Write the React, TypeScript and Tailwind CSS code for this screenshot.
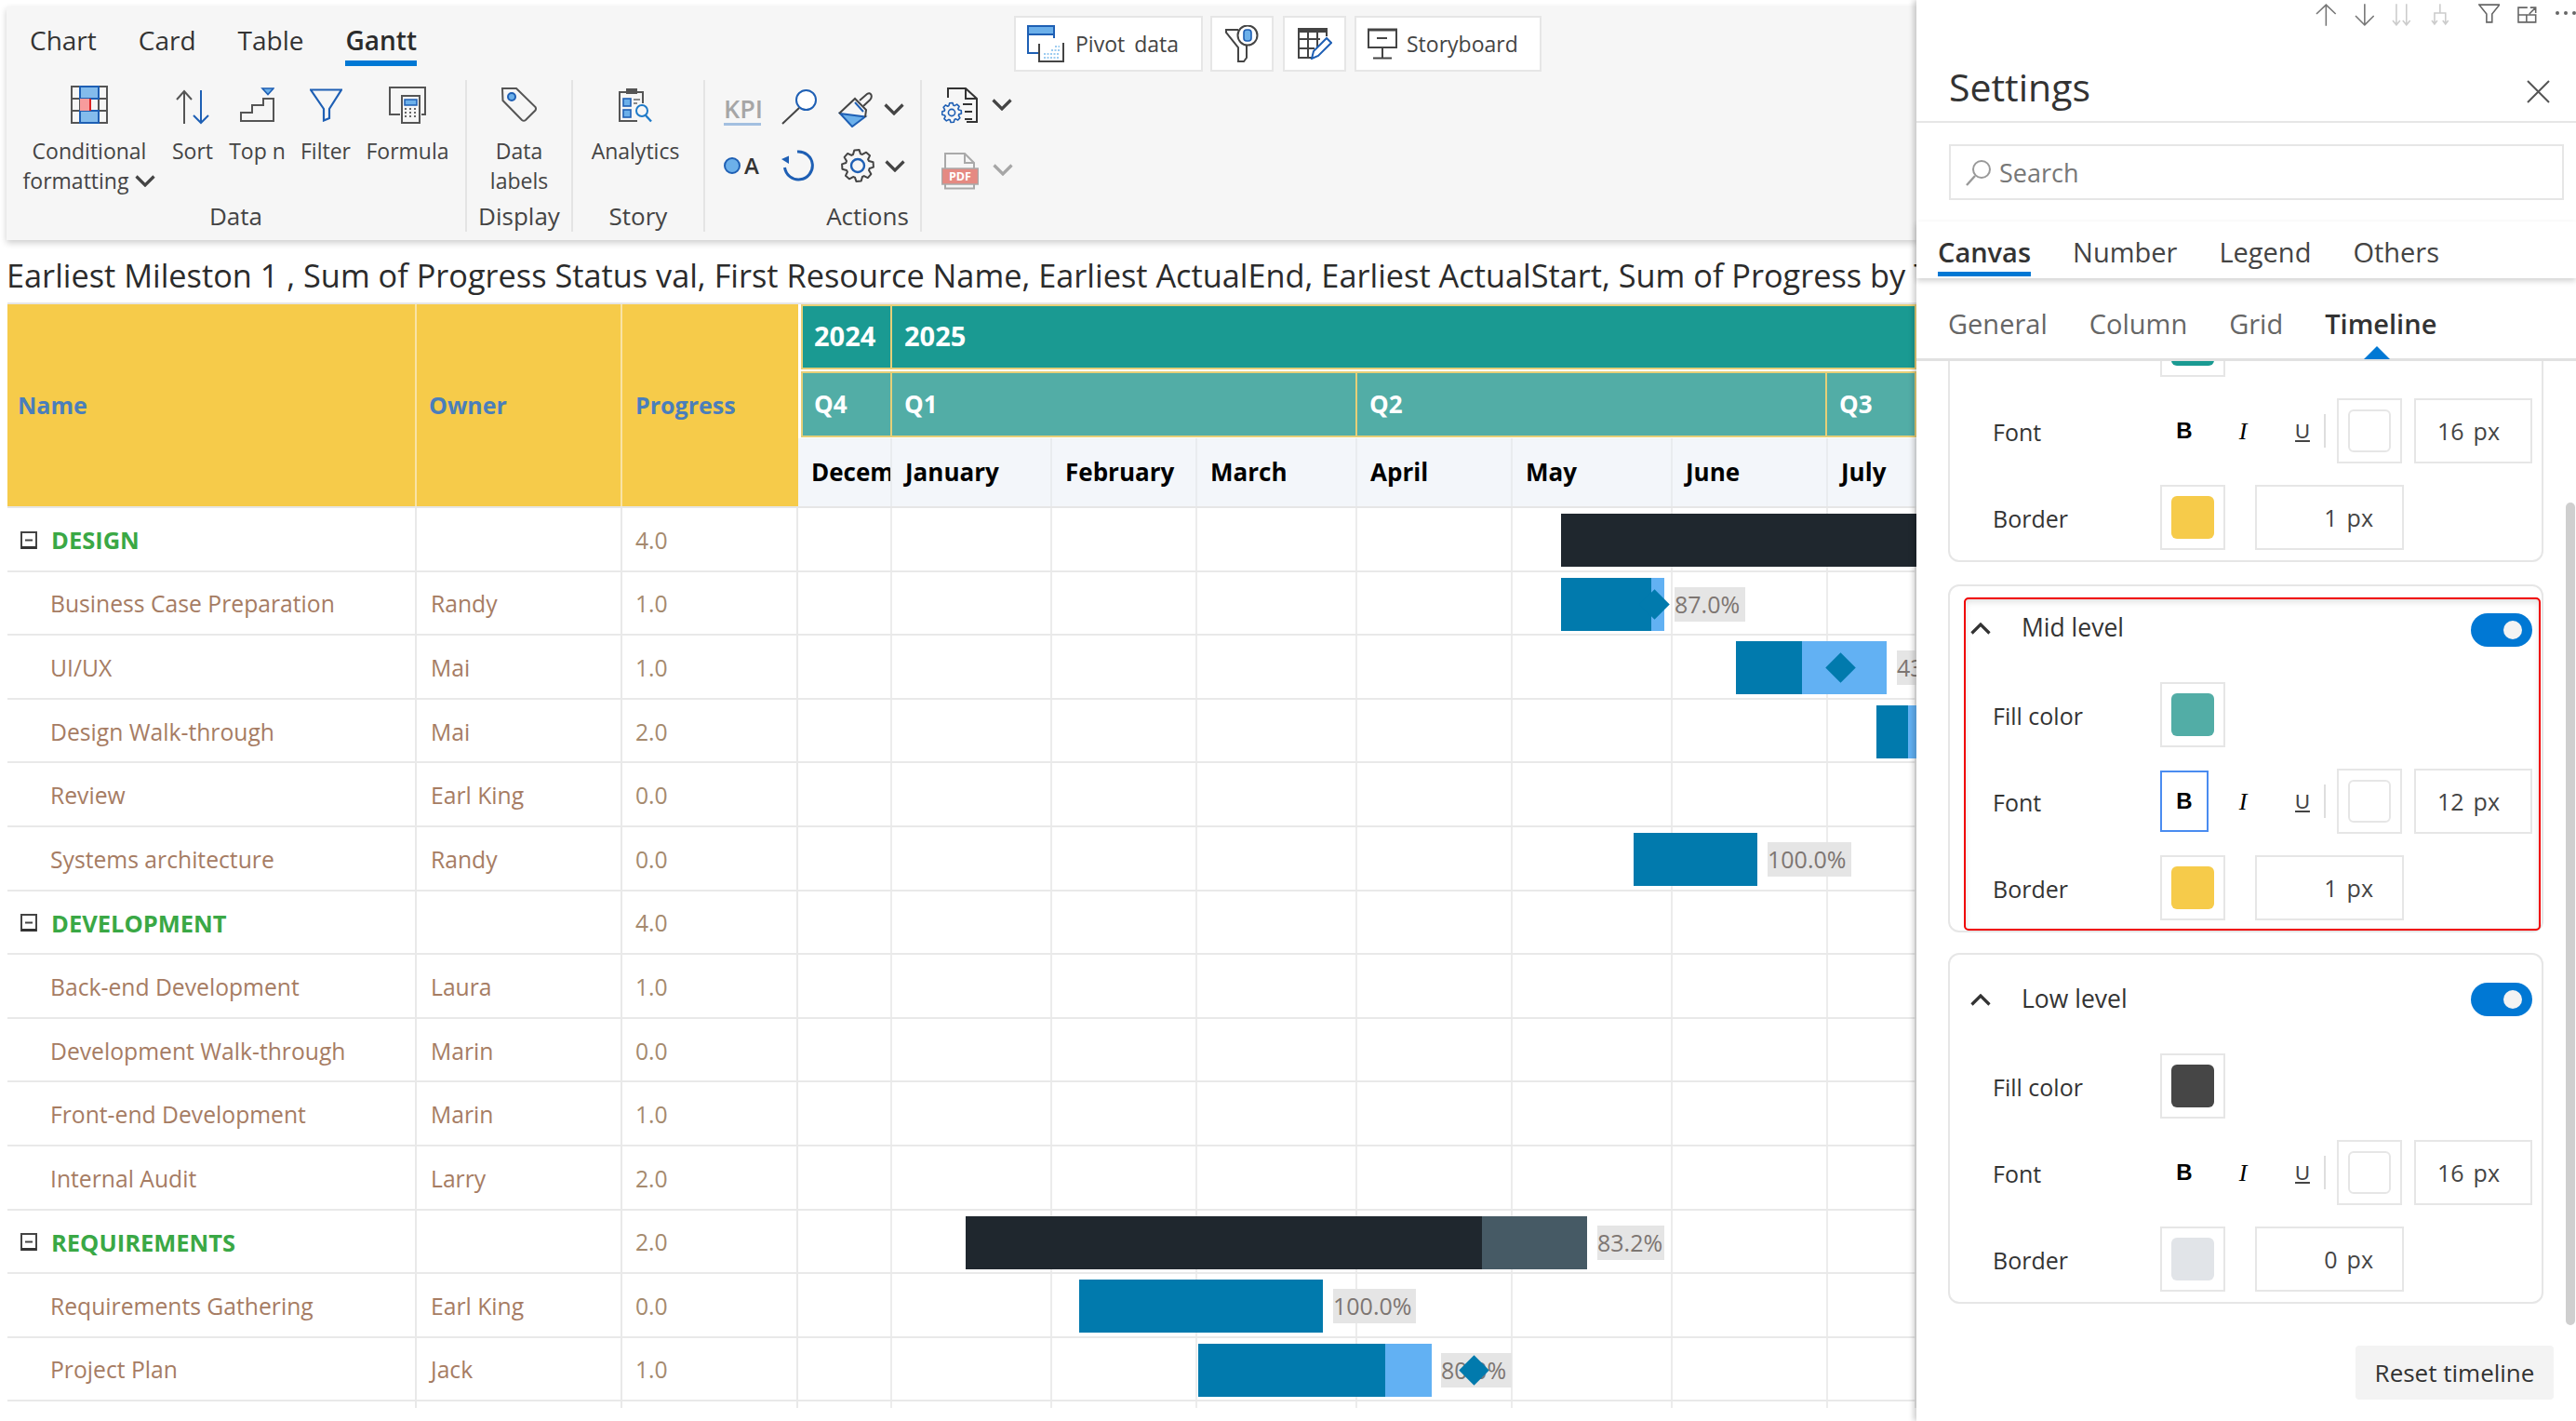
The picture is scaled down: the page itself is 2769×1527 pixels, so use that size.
import React from 'react';

const BLUE = '#1e5fb4';
const LIGHT = '#6cb0ea';

const gearPath = (cx: number, cy: number, outer: number, inner: number, teeth: number) => {
  const pts: string[] = [];
  for (let i = 0; i < teeth; i++) {
    const a = (i / teeth) * Math.PI * 2;
    const s = (Math.PI * 2) / teeth;
    const steps: [number, number][] = [
      [inner, -0.5],
      [outer, -0.28],
      [outer, 0.12],
      [inner, 0.3],
    ];
    steps.forEach(([r, k]) => {
      const t = a + k * s;
      pts.push(`${(cx + Math.cos(t) * r).toFixed(2)} ${(cy + Math.sin(t) * r).toFixed(2)}`);
    });
  }
  return `M${pts.join(' L')} Z`;
};

const Chevron = ({ color = '#444' }: { color?: string }) => (
  <svg width="22" height="13" viewBox="0 0 22 13" fill="none">
    <path d="M1.5 1.5 L11 11 L20.5 1.5" stroke={color} strokeWidth="3.2" />
  </svg>
);

const CondIcon = () => (
  <svg width="40" height="41" viewBox="0 0 40 41" fill="none" className="mt-[6px]">
    <path d="M1 1 H39 V40 H1 Z M1 14 H39 M1 27 H39 M10 1 V40 M30 1 V40" stroke="#555" strokeWidth="2" />
    <rect x="10" y="1" width="20" height="13" fill="#84bcec" stroke={BLUE} strokeWidth="2" />
    <rect x="10" y="27" width="20" height="13" fill="#84bcec" stroke={BLUE} strokeWidth="2" />
    <rect x="10" y="14" width="11" height="13" fill="#f79c9c" />
    <path d="M21 14 V27" stroke="#d22" strokeWidth="2" />
  </svg>
);

const SortIcon = () => (
  <svg width="36" height="38" viewBox="0 0 36 38" fill="none" className="mt-[10px]">
    <path d="M9 37 V2 M1 11 L9 2 L17 11" stroke="#555" strokeWidth="2" />
    <path d="M27 1 V36 M19 28 L27 36 L35 28" stroke={BLUE} strokeWidth="2" />
  </svg>
);

const TopNIcon = () => (
  <svg width="37" height="38" viewBox="0 0 37 38" fill="none" className="mt-[8px]">
    <path d="M24 1 H36 L30 7.5 Z" fill={LIGHT} stroke={BLUE} strokeWidth="1.6" />
    <path d="M1 36 V27 H13 V19 H25 V12 H36 V36 Z" stroke="#555" strokeWidth="2" />
  </svg>
);

const FilterIcon = () => (
  <svg width="35" height="36" viewBox="0 0 35 36" fill="none" className="mt-[9px]">
    <path d="M1 1.5 H34 L21 22 V32 L15 34.5 V22 Z" stroke={BLUE} strokeWidth="2.2" />
  </svg>
);

const FormulaIcon = () => (
  <svg width="40" height="40" viewBox="0 0 40 40" fill="none" className="mt-[7px]">
    <path d="M12 30 H1 V1 H39 V30 H35" stroke="#555" strokeWidth="2" />
    <rect x="14" y="10" width="19" height="29" fill="#f6f6f6" stroke="#555" strokeWidth="2" />
    <rect x="17" y="14" width="13" height="6" fill={LIGHT} stroke={BLUE} strokeWidth="1.5" />
    <path d="M17 24 H19 M22 24 H24 M27 24 H29 M17 28 H19 M22 28 H24 M27 28 H29 M17 32 H19 M22 32 H24 M27 32 H29" stroke="#666" strokeWidth="2" />
  </svg>
);

const TagIcon = () => (
  <svg width="38" height="38" viewBox="0 0 38 38" fill="none" className="mt-[7px]">
    <path d="M1 2 H16 L36.5 22 Q37.5 24 36.5 25.5 L26 36 Q24 37.5 22 36 L1.5 15 Z" stroke="#555" strokeWidth="2" />
    <circle cx="11" cy="11" r="4" fill={LIGHT} stroke={BLUE} strokeWidth="2" />
  </svg>
);

const AnalyticsIcon = () => (
  <svg width="36" height="37" viewBox="0 0 36 37" fill="none" className="mt-[9px]">
    <path d="M20 35 H1 V4 H26 V16" stroke="#555" strokeWidth="2" />
    <rect x="8" y="0" width="12" height="6" fill="#555" />
    <rect x="5" y="11" width="8" height="8" fill={LIGHT} stroke={BLUE} strokeWidth="1.6" />
    <rect x="5" y="23" width="8" height="8" fill={LIGHT} stroke={BLUE} strokeWidth="1.6" />
    <path d="M16 12 H23 M16 16 H20" stroke="#666" strokeWidth="1.6" />
    <circle cx="25" cy="24" r="6" fill="#f6f6f6" stroke="#1e7ac8" strokeWidth="2" />
    <path d="M29 29 L35 35.5" stroke="#1e7ac8" strokeWidth="2.4" />
  </svg>
);

const MagnifierIcon = () => (
  <svg width="38" height="38" viewBox="0 0 38 38" fill="none">
    <circle cx="26.5" cy="11.5" r="10.5" fill="#fff" stroke={BLUE} strokeWidth="2" />
    <path d="M19 20 L1 37" stroke="#444" strokeWidth="2" />
  </svg>
);

const BrushIcon = () => (
  <svg width="37" height="38" viewBox="0 0 37 38" fill="none">
    <path d="M2 23 L29 26.5 L15 37 Z" fill={LIGHT} stroke={BLUE} strokeWidth="2" />
    <path d="M1 23 L18 7 L30 19 L29 27" stroke="#444" strokeWidth="2" />
    <path d="M23 9 L31 2 Q34 0 35.5 3 Q36.5 6 34 8.5 L27 15" stroke="#444" strokeWidth="2" />
    <path d="M18 11 L27 21" stroke={BLUE} strokeWidth="2" />
  </svg>
);

const RefreshIcon = () => (
  <svg width="35" height="34" viewBox="0 0 35 34" fill="none">
    <path d="M17 2 A15 15 0 1 1 3.5 19" stroke={BLUE} strokeWidth="3" />
    <path d="M0 10 L8 6.5 L8 15 Z" fill={BLUE} />
  </svg>
);

const GearIcon = () => (
  <svg width="36" height="36" viewBox="0 0 36 36" fill="none">
    <path d={gearPath(18, 18, 17, 13, 8)} stroke="#444" strokeWidth="2" strokeLinejoin="round" />
    <circle cx="18" cy="18" r="7" stroke={BLUE} strokeWidth="2.4" />
  </svg>
);

const DocGearIcon = () => (
  <svg width="39" height="39" viewBox="0 0 39 39" fill="none">
    <path d="M7 11 V1 H26 L38 12 V37 H27 M26 1 V12 H38 M23 18 H33 M25 26 H33 M25 34 H33" stroke="#333" strokeWidth="2" />
    <path d={gearPath(11, 27, 10.5, 8, 8)} fill="#f6f6f6" stroke={BLUE} strokeWidth="1.6" strokeLinejoin="round" />
    <circle cx="11" cy="27" r="3.6" stroke={BLUE} strokeWidth="1.6" />
  </svg>
);

const PdfIcon = () => (
  <svg width="40" height="40" viewBox="0 0 40 40" fill="none">
    <path d="M4 18 V1 H25 L35 11 V18 M25 1 V11 H35 M4 33 V38.5 H35 V33" stroke="#a9a9a9" strokeWidth="2" />
    <rect x="0.5" y="17" width="39" height="17" fill="#e58a82" stroke="#a9a9a9" strokeWidth="1.5" />
    <text x="20" y="30" textAnchor="middle" fontSize="12.5" fontWeight="700" fill="#fff" fontFamily="'Open Sans', sans-serif">PDF</text>
  </svg>
);

const PivotIcon = () => (
  <svg width="40" height="41" viewBox="0 0 40 41" fill="none">
    <rect x="1" y="1" width="28" height="9" fill={LIGHT} />
    <path d="M12 30 H1 V1 H29 V14 M1 10 H29" stroke={BLUE} strokeWidth="2" />
    <path d="M13 20 V39 H39 V19" stroke="#444" strokeWidth="2" />
    <path d="M18 35 H35 M18 31 H35 M26 27 H35 M30 23 H35" stroke="#9ccbf0" strokeWidth="2" strokeDasharray="2 1.5" />
  </svg>
);

const FunnelDbIcon = () => (
  <svg width="36" height="41" viewBox="0 0 36 41" fill="none">
    <path d="M14 5 H1 V8 L14 24 V39 L20 39 L23 35 V22" stroke="#444" strokeWidth="2" />
    <circle cx="24" cy="11" r="10.5" fill="#fff" stroke="#444" strokeWidth="2" />
    <rect x="20" y="5" width="8" height="12" rx="3" fill={LIGHT} stroke={BLUE} strokeWidth="1.6" />
  </svg>
);

const TableEditIcon = () => (
  <svg width="37" height="34" viewBox="0 0 37 34" fill="none">
    <path d="M31 9 V1 H1 V32 H15 M1 12 H24 M1 22 H18 M11 5 V32 M21 5 V22" stroke="#444" strokeWidth="2" />
    <rect x="1" y="1" width="30" height="4" fill="#444" />
    <path d="M15 33 L17 25 L31 11 L36 16 L22 30 Z" fill="#fff" stroke={BLUE} strokeWidth="2" />
  </svg>
);

const BoardIcon = () => (
  <svg width="32" height="34" viewBox="0 0 32 34" fill="none">
    <path d="M1 2 H31 V21 H1 Z M16 21 V33 M10 11 H21 M6 32.5 H26" stroke="#444" strokeWidth="2" />
    <path d="M0 2 H32" stroke="#444" strokeWidth="3" />
  </svg>
);

const ToolBtn = ({ children, className }: { children: React.ReactNode; className: string }) => (
  <div className={`h-[60px] bg-white border-2 border-[#e6e6e6] flex items-center ${className}`}>{children}</div>
);

const Tool = ({ lines, icon, w }: { lines: React.ReactNode[]; icon: React.ReactNode; w: string }) => (
  <div className={`flex flex-col items-center ${w}`}>
    <div className="h-[60px] flex items-start justify-center">{icon}</div>
    {lines.map((l, i) => (
      <div key={i} className="h-[32px] leading-[32px] whitespace-nowrap text-[23px] text-[#444] flex items-center gap-[7px]">{l}</div>
    ))}
  </div>
);

const Group = ({ label, w, labelClass, children }: { label: string; w: string; labelClass?: string; children: React.ReactNode }) => (
  <div className={`${w} flex flex-col border-r-2 border-[#e4e4e4] h-[163px]`}>
    <div className="flex h-[131px]">{children}</div>
    <div className={`h-[32px] leading-[30px] text-center text-[26px] text-[#444] ${labelClass ?? ''}`}>{label}</div>
  </div>
);

const Ribbon = () => (
  <div className="h-[251px] bg-[#f6f6f6] shadow-[0_3px_7px_rgba(0,0,0,0.2)] relative z-10 shrink-0">
    <div className="flex h-[79px]">
      <div className="w-[1083px] flex pl-[25px] pt-[16px] gap-[45px] text-[28px] text-[#333]">
        <div className="leading-[40px]">Chart</div>
        <div className="leading-[40px]">Card</div>
        <div className="leading-[40px]">Table</div>
        <div className="leading-[40px] h-[48px] font-semibold text-[#2b2b2b] border-b-[6px] border-[#0078d4]">Gantt</div>
      </div>
      <div className="flex pt-[10px] text-[23px] text-[#444]">
        <ToolBtn className="w-[203px] pl-[12px] gap-[12px]">
          <PivotIcon />
          <span className="flex gap-[10px]"><span>Pivot</span><span>data</span></span>
        </ToolBtn>
        <ToolBtn className="w-[68px] ml-[8px] justify-center"><FunnelDbIcon /></ToolBtn>
        <ToolBtn className="w-[68px] ml-[10px] justify-center"><TableEditIcon /></ToolBtn>
        <ToolBtn className="w-[201px] ml-[9px] pl-[12px] gap-[10px]">
          <BoardIcon />
          <span>Storyboard</span>
        </ToolBtn>
      </div>
    </div>
    <div className="flex">
      <Group label="Data" w="w-[495px]">
        <div className="flex pl-[10px]">
          <Tool w="w-[158px]" icon={<CondIcon />} lines={['Conditional', <>formatting<Chevron /></>]} />
          <Tool w="w-[64px]" icon={<SortIcon />} lines={['Sort']} />
          <Tool w="w-[75px]" icon={<TopNIcon />} lines={['Top n']} />
          <Tool w="w-[72px]" icon={<FilterIcon />} lines={['Filter']} />
          <Tool w="w-[104px]" icon={<FormulaIcon />} lines={['Formula']} />
        </div>
      </Group>
      <Group label="Display" w="w-[114px]">
        <Tool w="w-full" icon={<TagIcon />} lines={['Data', 'labels']} />
      </Group>
      <Group label="Story" w="w-[142px]">
        <Tool w="w-full pr-[6px]" icon={<AnalyticsIcon />} lines={['Analytics']} />
      </Group>
      <Group label="Actions" w="w-[233px]" labelClass="pl-[118px] whitespace-nowrap">
        <div className="pl-[20px] pt-[10px] flex flex-col gap-[22px]">
          <div className="flex items-start h-[40px]">
            <div className="w-[40px] mt-[6px] text-[27px] leading-[30px] font-semibold text-[#a6a6a6] text-center border-b-[3px] border-[#a3bfe0]">KPI</div>
            <div className="ml-[22px]"><MagnifierIcon /></div>
            <div className="ml-[23px] mt-[3px]"><BrushIcon /></div>
            <div className="ml-[12px] mt-[15px]"><Chevron /></div>
          </div>
          <div className="flex items-center h-[40px]">
            <div className="w-[40px] flex items-center gap-[4px]">
              <span className="w-[18px] h-[18px] rounded-full bg-[#6cb0ea] border-2 border-[#1e5fb4]" />
              <span className="text-[24px] leading-[24px] text-[#333] font-semibold">A</span>
            </div>
            <div className="ml-[22px]"><RefreshIcon /></div>
            <div className="ml-[29px]"><GearIcon /></div>
            <div className="ml-[11px]"><Chevron /></div>
          </div>
        </div>
      </Group>
      <div className="pl-[21px] pt-[8px] flex flex-col gap-[31px]">
        <div className="flex items-start gap-[15px]"><DocGearIcon /><div className="mt-[12px]"><Chevron /></div></div>
        <div className="flex items-start gap-[15px]"><PdfIcon /><div className="mt-[12px]"><Chevron color="#a6a6a6" /></div></div>
      </div>
    </div>
  </div>
);

type Row = { name: string; owner: string; progress: string; group?: boolean };

const rows: Row[] = [
  { name: 'DESIGN', owner: '', progress: '4.0', group: true },
  { name: 'Business Case Preparation', owner: 'Randy', progress: '1.0' },
  { name: 'UI/UX', owner: 'Mai', progress: '1.0' },
  { name: 'Design Walk-through', owner: 'Mai', progress: '2.0' },
  { name: 'Review', owner: 'Earl King', progress: '0.0' },
  { name: 'Systems architecture', owner: 'Randy', progress: '0.0' },
  { name: 'DEVELOPMENT', owner: '', progress: '4.0', group: true },
  { name: 'Back-end Development', owner: 'Laura', progress: '1.0' },
  { name: 'Development Walk-through', owner: 'Marin', progress: '0.0' },
  { name: 'Front-end Development', owner: 'Marin', progress: '1.0' },
  { name: 'Internal Audit', owner: 'Larry', progress: '2.0' },
  { name: 'REQUIREMENTS', owner: '', progress: '2.0', group: true },
  { name: 'Requirements Gathering', owner: 'Earl King', progress: '0.0' },
  { name: 'Project Plan', owner: 'Jack', progress: '1.0' },
];

const months = [
  { label: 'December', w: 'w-[101px]' },
  { label: 'January', w: 'w-[172px]' },
  { label: 'February', w: 'w-[156px]' },
  { label: 'March', w: 'w-[172px]' },
  { label: 'April', w: 'w-[167px]' },
  { label: 'May', w: 'w-[172px]' },
  { label: 'June', w: 'w-[167px]' },
  { label: 'July', w: 'w-[95px]' },
];

type Seg = { from: number; to: number; color: string };
type Bar = { segs: Seg[]; label?: { from: number; to: number; text: string }; diamond?: number };

const MAIN = 'bg-[#017aad]';
const SOFT = 'bg-[#62b1f3]';
const NAVY = 'bg-[#1f272e]';

const bars: Record<number, Bar> = {
  0: { segs: [{ from: 1678, to: 2060, color: NAVY }] },
  1: { segs: [{ from: 1678, to: 1775, color: MAIN }, { from: 1775, to: 1789, color: SOFT }], label: { from: 1800, to: 1876, text: '87.0%' }, diamond: 1778 },
  2: { segs: [{ from: 1866, to: 1937, color: MAIN }, { from: 1937, to: 2028, color: SOFT }], label: { from: 2039, to: 2120, text: '43.0%' }, diamond: 1978 },
  3: { segs: [{ from: 2017, to: 2051, color: MAIN }, { from: 2051, to: 2120, color: SOFT }] },
  5: { segs: [{ from: 1756, to: 1889, color: MAIN }], label: { from: 1900, to: 1990, text: '100.0%' } },
  11: { segs: [{ from: 1038, to: 1593, color: NAVY }, { from: 1593, to: 1706, color: 'bg-[#465a65]' }], label: { from: 1717, to: 1789, text: '83.2%' } },
  12: { segs: [{ from: 1160, to: 1422, color: MAIN }], label: { from: 1433, to: 1522, text: '100.0%' } },
  13: { segs: [{ from: 1288, to: 1489, color: MAIN }, { from: 1489, to: 1539, color: SOFT }], label: { from: 1549, to: 1625, text: '80.0%' }, diamond: 1584 },
};

// bars are placed on the timeline in page x, the chart starts at 858
const CHART_X = 858;

const GanttBars = ({ bar }: { bar: Bar }) => (
  <>
    {bar.segs.map((s, i) => (
      <div key={i} className={`absolute top-[6px] h-[57px] ${s.color}`} style={{ left: s.from - CHART_X, width: s.to - s.from }} />
    ))}
    {bar.label && (
      <div
        className="absolute top-[16px] h-[37px] bg-[#e5e5e5] text-[#7d7672] text-[25px] leading-[37px] whitespace-nowrap"
        style={{ left: bar.label.from - CHART_X, width: bar.label.to - bar.label.from }}
      >
        {bar.label.text}
      </div>
    )}
    {bar.diamond !== undefined && (
      <div className="absolute top-[23px] w-[23px] h-[23px] rotate-45 bg-[#017aad]" style={{ left: bar.diamond - CHART_X - 11.5 }} />
    )}
  </>
);

const TimelineHeader = () => (
  <div className="w-[1202px] flex flex-col pl-[3px] font-bold">
    <div className="flex h-[72px] text-white text-[29px]">
      <div className="w-[98px] h-[70px] bg-[#1a9a92] border-2 border-[#e6cf78] pl-[12px] pb-[2px] flex items-center">2024</div>
      <div className="flex-1 h-[70px] bg-[#1a9a92] border-2 border-l-0 border-[#e6cf78] pl-[13px] pb-[2px] flex items-center">2025</div>
    </div>
    <div className="flex h-[72px] text-white text-[26px]">
      <div className="w-[98px] h-[71px] bg-[#52ada6] border-2 border-[#e6cf78] pl-[12px] flex items-center">Q4</div>
      <div className="w-[500px] h-[71px] bg-[#52ada6] border-2 border-l-0 border-[#e6cf78] pl-[13px] flex items-center">Q1</div>
      <div className="w-[505px] h-[71px] bg-[#52ada6] border-2 border-l-0 border-[#e6cf78] pl-[13px] flex items-center">Q2</div>
      <div className="flex-1 h-[71px] bg-[#52ada6] border-2 border-l-0 border-[#e6cf78] pl-[13px] flex items-center">Q3</div>
    </div>
    <div className="flex h-[73px] -ml-[3px] bg-[#f3f6fa] text-black text-[26px]">
      {months.map((m) => (
        <div key={m.label} className={`${m.w} shrink-0 overflow-hidden border-r-2 border-[#e9ecef] pl-[14px] flex items-center whitespace-nowrap`}>{m.label}</div>
      ))}
    </div>
  </div>
);

const MinusBox = () => (
  <svg width="18" height="19" viewBox="0 0 18 19" fill="none" className="mr-[15px] shrink-0">
    <path d="M1 1 H17 V18 H1 Z" stroke="#444" strokeWidth="2" />
    <path d="M1 17.5 H17" stroke="#333" strokeWidth="3" />
    <path d="M5 9.5 H13" stroke="#444" strokeWidth="2" />
  </svg>
);

const Gantt = () => (
  <div className="flex flex-col ml-px">
    <div className="h-[2px] bg-[#e6e6e6] w-[2060px]" />
    <div className="flex h-[217px]">
      <div className="w-[440px] bg-[#f6cb4a] border-r-2 border-[#f9e3a5] pl-[11px] flex items-center font-bold text-[25px] text-[#4a7ebb]">Name</div>
      <div className="w-[221px] bg-[#f6cb4a] border-r-2 border-[#f9e3a5] pl-[13px] flex items-center font-bold text-[25px] text-[#4a7ebb]">Owner</div>
      <div className="w-[189px] bg-[#f6cb4a] pl-[14px] flex items-center font-bold text-[25px] text-[#4a7ebb]">Progress</div>
      <TimelineHeader />
    </div>
    <div className="h-[2px] bg-[#e6e6e6] w-[2060px]" />
    {rows.map((r, i) => (
      <div key={r.name} className="flex h-[68.6px] border-b-2 border-[#e9e9e9] text-[24.7px] text-[#a67c63]">
        <div className={`w-[440px] border-r-2 border-[#e9e9e9] pl-[14px] pt-[2px] flex items-center whitespace-nowrap ${r.group ? 'font-bold text-[25.5px] text-[#3aa845]' : ''}`}>
          {r.group ? <MinusBox /> : <div className="w-[32px]" />}
          {r.name}
        </div>
        <div className="w-[221px] border-r-2 border-[#e9e9e9] pl-[15px] pt-[2px] flex items-center">{r.owner}</div>
        <div className="w-[189px] border-r-2 border-[#e9e9e9] pl-[14px] pt-[2px] flex items-center text-[#a58a6e]">{r.progress}</div>
        <div className="w-[1202px] relative flex overflow-hidden">
          {months.map((m) => (
            <div key={m.label} className={`${m.w} shrink-0 border-r-2 border-[#ececec]`} />
          ))}
          {bars[i] && <GanttBars bar={bars[i]} />}
        </div>
      </div>
    ))}
    <div className="flex h-[7px]">
      <div className="w-[440px] border-r-2 border-[#e9e9e9]" />
      <div className="w-[221px] border-r-2 border-[#e9e9e9]" />
      <div className="w-[189px] border-r-2 border-[#e9e9e9]" />
      {months.map((m) => (
        <div key={m.label} className={`${m.w} shrink-0 border-r-2 border-[#ececec]`} />
      ))}
    </div>
  </div>
);

const Swatch = ({ color }: { color: string }) => (
  <div className="w-[70px] h-[70px] border-2 border-[#e6e6e6] flex items-center justify-center shrink-0">
    <div className={`w-[46px] h-[46px] rounded-[6px] ${color}`} />
  </div>
);

const FontRow = ({ size, focus }: { size: string; focus?: boolean }) => (
  <div className="flex items-center h-[70px]">
    <div className="w-[180px] pt-[3px] text-[25px] text-[#333]">Font</div>
    <div className={`w-[52px] h-[66px] flex items-center justify-center text-[24px] font-bold text-black font-['Liberation_Sans'] ${focus ? 'border-2 border-[#4a8cf0]' : ''}`}>B</div>
    <div className="w-[52px] ml-[11px] text-center text-[26px] italic text-black font-['Liberation_Serif']">I</div>
    <div className="w-[52px] ml-[12px] text-center text-[22px] underline text-[#444] font-['Liberation_Sans']">U</div>
    <div className="w-[2px] h-[36px] bg-[#dedede] -ml-[3px]" />
    <div className="w-[70px] h-[70px] ml-[12px] border-2 border-[#e6e6e6] flex items-center justify-center">
      <div className="w-[46px] h-[46px] rounded-[6px] bg-white border-2 border-[#e6e6e6]" />
    </div>
    <div className="w-[127px] h-[70px] ml-[13px] border-2 border-[#e6e6e6] flex items-center justify-end gap-[10px] pr-[33px] pt-[2px] text-[25px] text-[#444]">
      <span>{size}</span><span>px</span>
    </div>
  </div>
);

const BorderRow = ({ color, px }: { color: string; px: string }) => (
  <div className="flex items-center h-[70px]">
    <div className="w-[180px] pt-[3px] text-[25px] text-[#333]">Border</div>
    <Swatch color={color} />
    <div className="w-[160px] h-[70px] ml-[32px] border-2 border-[#e6e6e6] flex items-center justify-end gap-[10px] pr-[31px] pt-[2px] text-[25px] text-[#444]">
      <span>{px}</span><span>px</span>
    </div>
  </div>
);

const Level = ({ title, fill, size, borderColor, px, top, focus, highlight }: {
  title: string; fill: string; size: string; borderColor: string; px: string; top: string; focus?: boolean; highlight?: boolean;
}) => (
  <div className={`relative w-[640px] ml-[34px] border-2 border-[#e6e6e6] rounded-[12px] pl-[46px] pb-[11px] shrink-0 ${top}`}>
    {highlight && <div className="absolute top-[12px] left-[15px] right-[1px] bottom-[0px] border-2 border-[#f00000] rounded-[5px] shadow-[inset_0_3px_6px_rgba(0,0,0,0.12)] pointer-events-none" />}
    <div className="flex items-center h-[36px] -ml-[24px]">
      <svg width="22" height="13" viewBox="0 0 22 13" fill="none">
        <path d="M1.5 11.5 L11 2 L20.5 11.5" stroke="#333" strokeWidth="3.2" />
      </svg>
      <div className="ml-[33px] text-[26.5px] font-medium text-[#333] flex-1">{title}</div>
      <div className={`w-[66px] h-[36px] rounded-full bg-[#0078d4] mr-[10px] flex items-center justify-end pr-[11px] ${highlight ? 'mt-[4px]' : ''}`}>
        <div className="w-[20px] h-[20px] rounded-full bg-[#f3f3f3]" />
      </div>
    </div>
    <div className="flex flex-col gap-[23px] mt-[40px]">
      <div className="flex items-center h-[70px]">
        <div className="w-[180px] pt-[3px] text-[25px] text-[#333]">Fill color</div>
        <Swatch color={fill} />
      </div>
      <FontRow size={size} focus={focus} />
      <BorderRow color={borderColor} px={px} />
    </div>
  </div>
);

const TopIcons = () => (
  <div className="h-[34px] flex pl-[429px] pt-[4px] items-start shrink-0" >
    <svg width="23" height="24" viewBox="0 0 23 24" fill="none"><path d="M11.5 24 V1 M1 11 L11.5 1 L22 11" stroke="#777" strokeWidth="1.6" /></svg>
    <svg width="22" height="24" viewBox="0 0 22 24" fill="none" className="ml-[19px]"><path d="M11 0 V23 M1 13 L11 23 L21 13" stroke="#777" strokeWidth="1.6" /></svg>
    <svg width="21" height="24" viewBox="0 0 21 24" fill="none" className="ml-[19px]"><path d="M5 0 V23 M16 0 V23 M1 18 L5 23 L9 18 M12 18 L16 23 L20 18" stroke="#ccc" strokeWidth="1.6" /></svg>
    <svg width="20" height="24" viewBox="0 0 20 24" fill="none" className="ml-[21px]"><path d="M10 0 V10 M4 22 V10 H16 V22 M1 18 L4 22 L7 18 M13 18 L16 22 L19 18" stroke="#ccc" strokeWidth="1.6" /></svg>
    <svg width="24" height="21" viewBox="0 0 24 21" fill="none" className="ml-[31px]"><path d="M1 1 H23 L15 11 V20 H9 V11 Z" stroke="#666" strokeWidth="1.6" /></svg>
    <svg width="21" height="18" viewBox="0 0 21 18" fill="none" className="ml-[19px] mt-[3px]"><path d="M11 1 H1 V17 H20 V9 H1 M10 9 V17 M13 8 L20 1 M14 1 H20 V7" stroke="#666" strokeWidth="1.6" /></svg>
    <div className="ml-[20px] mt-[8px] flex gap-[5px]">
      <span className="w-[4px] h-[4px] rounded-full bg-[#666]" />
      <span className="w-[4px] h-[4px] rounded-full bg-[#666]" />
      <span className="w-[4px] h-[4px] rounded-full bg-[#666]" />
    </div>
  </div>
);

const Settings = () => (
  <div className="relative w-[709px] h-[1527px] bg-white flex flex-col shadow-[-3px_0_6px_rgba(0,0,0,0.2)] z-20 shrink-0">
    <TopIcons />
    <div className="h-[98px] border-b-2 border-[#e6e6e6] pt-[24px] pl-[35px] pr-[28px] flex items-center justify-between shrink-0">
      <div className="text-[41px] text-[#333]">Settings</div>
      <svg width="25" height="25" viewBox="0 0 25 25" fill="none" className="mt-[8px]">
        <path d="M1 1 L24 24 M24 1 L1 24" stroke="#555" strokeWidth="2" />
      </svg>
    </div>
    <div className="h-[106px] pt-[23px] pl-[35px] shrink-0">
      <div className="w-[661px] h-[60px] border-2 border-[#e6e6e6] flex items-center pl-[16px] gap-[9px] pt-[2px] text-[27px] text-[#777]">
        <svg width="27" height="28" viewBox="0 0 27 28" fill="none">
          <circle cx="17" cy="10" r="9" stroke="#999" strokeWidth="2" />
          <path d="M10 17 L1 27" stroke="#999" strokeWidth="2.4" />
        </svg>
        Search
      </div>
    </div>
    <div className="relative z-10 h-[61px] bg-white shadow-[0_3px_6px_rgba(0,0,0,0.18)] flex items-center pl-[23px] pt-[4px] gap-[45px] text-[29px] text-[#444] shrink-0">
      <div className="relative font-semibold text-[#333]">
        Canvas
        <div className="absolute left-0 right-0 top-[43px] h-[5px] bg-[#0078d4]" />
      </div>
      <div>Number</div>
      <div>Legend</div>
      <div>Others</div>
    </div>
    <div className="relative h-[89px] border-b-[3px] border-[#e1e1e1] pl-[34px] pt-[11px] flex items-center gap-[45px] text-[29px] text-[#666] shrink-0">
      <div>General</div>
      <div>Column</div>
      <div>Grid</div>
      <div className="font-semibold text-[#333]">Timeline</div>
      <div className="absolute left-[481px] bottom-[-1px] w-0 h-0 border-l-[14px] border-r-[14px] border-b-[14px] border-l-transparent border-r-transparent border-b-[#0078d4]" />
    </div>
    <div className="relative flex-1 overflow-hidden flex flex-col">
      <Level title="Top level" fill="bg-[#1a9a92]" size="16" borderColor="bg-[#f6cb4a]" px="1" top="-mt-[179px] pt-[48px]" />
      <Level title="Mid level" fill="bg-[#52ada6]" size="12" borderColor="bg-[#f6cb4a]" px="1" top="mt-[24px] pt-[27px]" focus highlight />
      <Level title="Low level" fill="bg-[#464646]" size="16" borderColor="bg-[#e1e4e8]" px="0" top="mt-[22px] pt-[30px]" />
      <div className="self-end mt-[45px] mr-[24px] w-[213px] h-[58px] rounded-[4px] bg-[#f3f3f3] flex items-center justify-center text-[26px] text-[#333] shrink-0">Reset timeline</div>
      <div className="absolute left-[698px] top-[152px] w-[10px] h-[884px] rounded-full bg-[#cfcfcf]" />
    </div>
  </div>
);

export default function App() {
  return (
    <div className="w-[2769px] h-[1527px] flex overflow-hidden bg-white font-['Open_Sans',sans-serif]">
      <div className="w-[2060px] h-[1527px] pl-[7px] pt-[7px] flex flex-col overflow-hidden shrink-0">
        <Ribbon />
        <div className="h-[67px] pt-[8px] flex items-center whitespace-nowrap text-[34.3px] font-medium text-[#2b2b2b] shrink-0">
          Earliest Mileston 1 , Sum of Progress Status val, First Resource Name, Earliest ActualEnd, Earliest ActualStart, Sum of Progress by Time
        </div>
        <Gantt />
      </div>
      <Settings />
    </div>
  );
}
